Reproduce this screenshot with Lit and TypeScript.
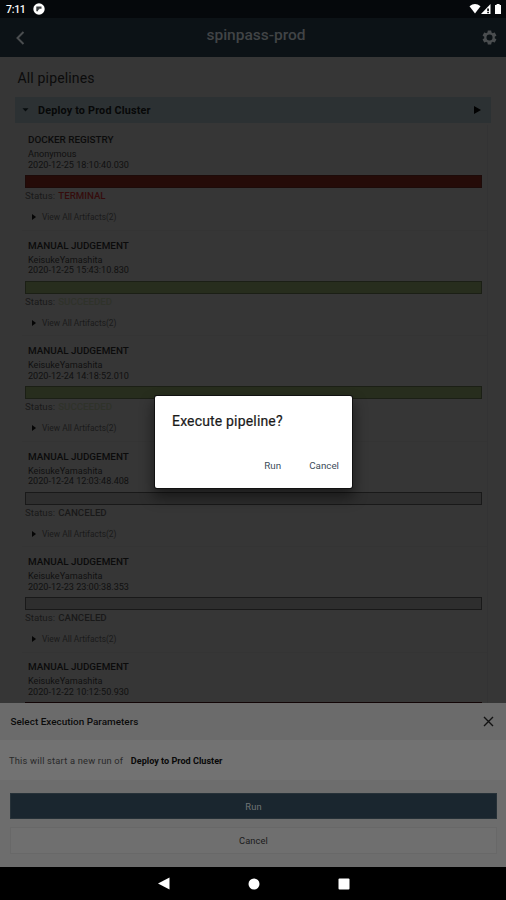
import { LitElement, html, css, nothing } from "lit";
import { customElement } from "lit/decorators.js";
import { classMap } from "lit/directives/class-map.js";

interface Execution {
  title: string;
  user: string;
  date: string;
  status?: string;
}

const EXECUTIONS: Execution[] = [
  { title: "DOCKER REGISTRY", user: "Anonymous", date: "2020-12-25 18:10:40.030", status: "TERMINAL" },
  { title: "MANUAL JUDGEMENT", user: "KeisukeYamashita", date: "2020-12-25 15:43:10.830", status: "SUCCEEDED" },
  { title: "MANUAL JUDGEMENT", user: "KeisukeYamashita", date: "2020-12-24 14:18:52.010", status: "SUCCEEDED" },
  { title: "MANUAL JUDGEMENT", user: "KeisukeYamashita", date: "2020-12-24 12:03:48.408", status: "CANCELED" },
  { title: "MANUAL JUDGEMENT", user: "KeisukeYamashita", date: "2020-12-23 23:00:38.353", status: "CANCELED" },
  { title: "MANUAL JUDGEMENT", user: "KeisukeYamashita", date: "2020-12-22 10:12:50.930" },
];

@customElement("app-root")
export class AppRoot extends LitElement {
  static styles = css`
    :host {
      position: relative;
      display: flex;
      flex-direction: column;
      width: 506px;
      height: 900px;
      overflow: hidden;
      background: #363636;
      color: #0b0b0b;
      font-family: Roboto, sans-serif;
      white-space: nowrap;
    }
    * { box-sizing: border-box; }
    svg { display: block; flex: none; }
    .statusbar {
      height: 18px;
      flex: none;
      display: flex;
      align-items: center;
      padding: 0 4px 0 6px;
      background: #05080b;
      color: #fff;
      font-size: 10.5px;
      font-weight: 500;
    }
    .clock { width: 27px; letter-spacing: -0.3px; }
    .signals { margin-left: auto; }
    .header {
      height: 39px;
      flex: none;
      display: flex;
      align-items: center;
      justify-content: space-between;
      padding: 0 8px 0 14px;
      background: #0c1216;
    }
    .name {
      color: #414446;
      font-size: 15.5px;
      font-weight: 500;
      padding: 0 0 5px 5px;
    }
    .content { flex: 1; min-height: 0; overflow: hidden; padding: 0 15px; }
    .heading {
      font-size: 14px;
      line-height: 16px;
      letter-spacing: 0.16px;
      padding: 13px 0 11px 2.5px;
    }
    .pipeline {
      height: 26px;
      display: flex;
      align-items: center;
      background: #2c3133;
      padding: 0 10px 0 7px;
      font-size: 10.8px;
      letter-spacing: 0.18px;
      font-weight: 700;
      color: #070808;
    }
    .pipeline span { flex: 1; padding-left: 9px; }
    .runs { margin: 2px 3px 0 7px; border-right: 1px solid #333334; }
    .run { height: 105.5px; padding: 8px 5px 0 3px; border-bottom: 1px solid #343434; }
    .title { font-size: 9.9px; line-height: 14px; font-weight: 500; padding-left: 3px; }
    .meta { font-size: 9.1px; line-height: 10.5px; padding-left: 3px; color: #101010; }
    .user { padding-top: 2px; }
    .bar { height: 13px; margin-top: 5px; border: 1px solid #191919; background: #2e2e2e; }
    .status { font-size: 9.7px; line-height: 12px; margin-top: 2px; color: #191919; }
    .value { font-weight: 500; margin-left: 0.8px; }
    .failed .bar { background: #250b08; border-color: #1d0b09; }
    .failed .value { color: #350c0c; }
    .passed .bar { background: #272d1d; border-color: #1b1f15; }
    .passed .value { color: #2f322a; }
    .partial { height: 78px; border-bottom: 0; padding-top: 7.5px; }
    .partial .bar { height: 1px; margin-top: 5px; border: 0; background: #120506; }
    .artifacts { display: flex; align-items: center; gap: 6px; margin-top: 9px; padding-left: 7px; font-size: 8.4px; line-height: 12px; color: #1a1a1a; }
    .sheet { height: 164px; flex: none; display: flex; flex-direction: column; background: #6d6d6d; }
    .sheet-head { height: 37px; display: flex; align-items: center; justify-content: space-between; padding: 0 12px 0 10.500px; background: #6b6b6b; font-size: 9.95px; font-weight: 500; }
    .sheet-body { height: 40px; display: flex; align-items: center; gap: 7.500px; padding: 1px 9px 0; background: #727272; color: #292929; font-size: 9.3px; }
    .intro { letter-spacing: 0.2px; padding-bottom: 1px; }
    .target { color: #090909; font-weight: 700; font-size: 9.1px; }
    .actions { padding: 13px 9px 0 10px; display: flex; flex-direction: column; gap: 8px; text-align: center; font-size: 9.3px; letter-spacing: 0.1px; }
    .primary { height: 26px; background: #1a262f; color: #707476; border: 1px solid #263138; line-height: 25px; }
    .secondary { height: 27px; line-height: 26px; border: 1px solid #686868; color: #1b1b1b; background: #6f6f6f; }
    .nav { height: 33px; flex: none; background: #000; display: flex; justify-content: center; align-items: center; gap: 78px; padding-left: 1px; }
    .dialog {
      position: absolute;
      left: 155px;
      top: 396px;
      width: 197px;
      height: 92px;
      display: flex;
      flex-direction: column;
      justify-content: space-between;
      background: #fff;
      border-radius: 2px;
      padding: 16px 13px 14px 17px;
      box-shadow: 0 0 0 1px #111, 0 8px 14px 2px rgba(0, 0, 0, 0.45);
    }
    .question { font-size: 14px; line-height: 18px; color: #1a1a1a; letter-spacing: 0.17px; -webkit-text-stroke: 0.2px #1a1a1a; }
    .choices { display: flex; justify-content: flex-end; gap: 28px; font-size: 9.8px; line-height: 16px; color: #3d4c5a; }
  `;

  private renderRun(run: Execution) {
    const tone = {
      run: true,
      failed: run.status === "TERMINAL",
      passed: run.status === "SUCCEEDED",
      partial: !run.status,
    };
    return html`<section class=${classMap(tone)}>
      <div class="title">${run.title}</div>
      <div class="meta user">${run.user}</div>
      <div class="meta">${run.date}</div>
      <div class="bar"></div>
      ${run.status
        ? html`<div class="status">Status: <span class="value">${run.status}</span></div>
            <div class="artifacts">
              <svg width="4" height="6" viewBox="0 0 4 6"><path d="M0 0l4 3-4 3z" fill="#050505" /></svg>
              <span>View All Artifacts(2)</span>
            </div>`
        : nothing}
    </section>`;
  }

  render() {
    return html`
      <div class="statusbar">
        <span class="clock">7:11</span>
        <svg width="12" height="12" viewBox="0 0 12 12">
          <circle cx="6" cy="6" r="5.700" fill="#fff" />
          <path d="M3.300 8.300V3.600h5.200v2.200H6.200v1H5.100v1.500z" fill="#3b3e41" />
        </svg>
        <svg class="signals" width="33" height="12" viewBox="0 0 33 12">
          <path d="M.5 3.200Q6-1.200 11.500 3.200L6 10.500z" fill="#fff" />
          <path d="M12 11L21.500 1v10z" fill="#fff" />
          <path d="M18.200 5.500h1.700v2.700h-1.700zM18.200 9h1.700v1.200h-1.700z" fill="#05080b" />
          <path d="M26 2h1.600V1h3v1H32v9h-6z" fill="#fff" />
        </svg>
      </div>
      <div class="header">
        <svg width="12" height="16" viewBox="0 0 12 16"><path d="M9.500 2L3.500 8l6 6" fill="none" stroke="#4a4d4f" stroke-width="2" /></svg>
        <span class="name">spinpass-prod</span>
        <svg width="17" height="17" viewBox="0 0 24 24"><path fill="#4a4d4f" fill-rule="evenodd" d="M19.400 13l.1-1-.1-1 2.100-1.600c.2-.2.300-.4.100-.6l-2-3.500c-.1-.2-.4-.3-.6-.2l-2.500 1c-.5-.4-1.100-.7-1.700-1L14.500 2.400c0-.2-.2-.4-.5-.4h-4c-.3 0-.5.200-.5.400L9.200 5.100c-.6.300-1.200.600-1.700 1L5 5.100c-.2-.1-.5 0-.6.200l-2 3.500c-.1.200-.1.500.1.600L4.600 11l-.1 1 .1 1-2.100 1.600c-.2.200-.2.400-.1.600l2 3.500c.1.200.4.300.6.200l2.500-1c.5.400 1.100.7 1.700 1l.3 2.700c0 .2.200.4.500.4h4c.3 0 .5-.2.500-.4l.3-2.700c.6-.3 1.200-.6 1.700-1l2.500 1c.2.1.5 0 .6-.2l2-3.500c.1-.2.1-.4-.1-.6zM12 7.700a4.300 4.300 0 1 0 0 8.600 4.300 4.300 0 0 0 0-8.600z" /></svg>
      </div>
      <main class="content">
        <div class="heading">All pipelines</div>
        <div class="pipeline">
          <svg width="7" height="4" viewBox="0 0 7 4"><path d="M.5.3h6L3.500 3.600z" fill="#070c0e" /></svg>
          <span>Deploy to Prod Cluster</span>
          <svg width="7" height="8" viewBox="0 0 7 8"><path d="M0 0l7 4-7 4z" fill="#020202" /></svg>
        </div>
        <div class="runs">${EXECUTIONS.map((run) => this.renderRun(run))}</div>
      </main>
      <div class="sheet">
        <div class="sheet-head">
          <span>Select Execution Parameters</span>
          <svg width="11" height="11" viewBox="0 0 11 11"><path d="M1 1l9 9M10 1l-9 9" stroke="#121212" stroke-width="1.400" /></svg>
        </div>
        <div class="sheet-body">
          <span class="intro">This will start a new run of</span>
          <span class="target">Deploy to Prod Cluster</span>
        </div>
        <div class="actions">
          <div class="primary">Run</div>
          <div class="secondary">Cancel</div>
        </div>
      </div>
      <div class="nav">
        <svg width="12" height="13" viewBox="0 0 12 13"><path d="M0 6.500L11.500.5v12z" fill="#fff" /></svg>
        <svg width="12" height="12" viewBox="0 0 12 12"><circle cx="6" cy="6" r="5.500" fill="#fff" /></svg>
        <svg width="12" height="12" viewBox="0 0 12 12"><rect x=".5" y=".5" width="11" height="11" rx="1" fill="#fff" /></svg>
      </div>
      <div class="dialog">
        <div class="question">Execute pipeline?</div>
        <div class="choices"><span>Run</span><span>Cancel</span></div>
      </div>
    `;
  }
}
